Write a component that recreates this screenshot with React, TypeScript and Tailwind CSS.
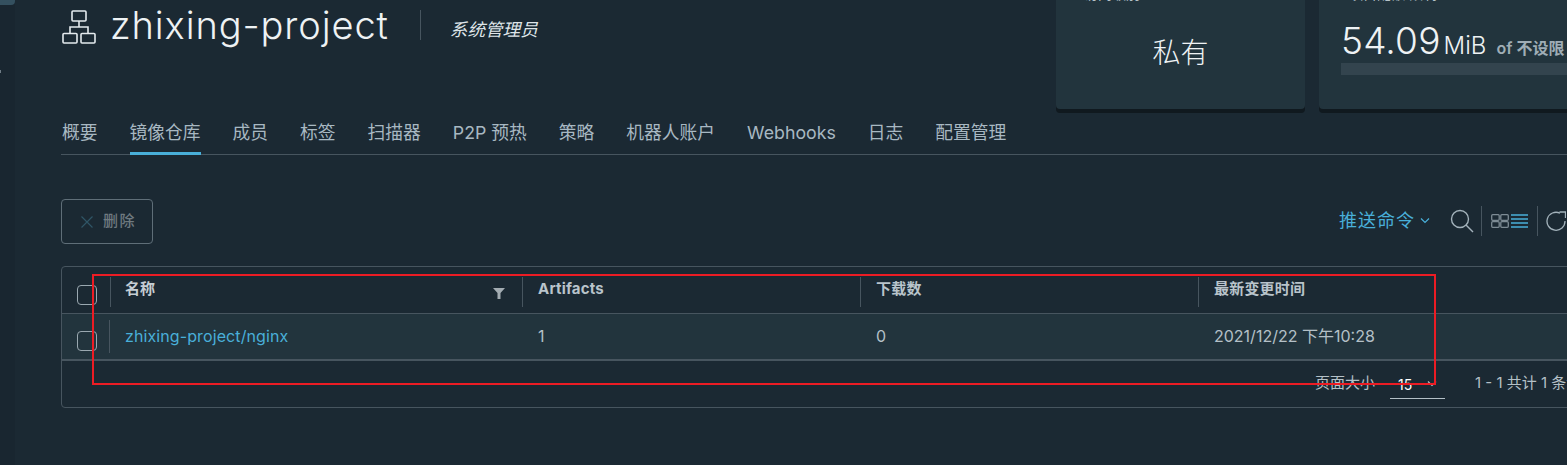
import React from 'react';

const cjk = 'font-["Inter","Noto_Sans_CJK_SC",sans-serif]';

const tabs = ['概要', '镜像仓库', '成员', '标签', '扫描器', 'P2P 预热', '策略', '机器人账户', 'Webhooks', '日志', '配置管理'];

const Checkbox = () => (
  <span className="block h-[20px] w-[20px] rounded-[4px] border border-[#9aa8b0]" />
);

const ProjectIcon = () => (
  <svg className="mt-[4px] ml-[1px]" width="34" height="34" viewBox="0 0 34 34" fill="none" stroke="#e4eaee" strokeWidth="1.6">
    <rect x="10" y="1" width="14" height="10" rx="1" />
    <rect x="1" y="23.5" width="14" height="9.5" rx="1" />
    <rect x="19" y="23.5" width="14" height="9.5" rx="1" />
    <path d="M17 11v6M8 23.5V17h18v6.5" />
  </svg>
);

const App = () => {
  return (
    <div className={`flex h-[465px] w-[1567px] overflow-hidden bg-[#1b2933] ${cjk}`}>
      <div className="w-[15px] shrink-0 bg-[#192630]">
        <div className="h-[5px] rounded-br-[4px] bg-[#34505f]" />
        <div className="mt-[65px] h-[3px] w-[1px] bg-[#6f7c85]" />
      </div>

      <div className="flex min-w-0 flex-1 flex-col pl-[46px]">
        {/* Header */}
        <div className="flex h-[113px] shrink-0 items-start">
          <div className="flex items-center pt-[5px]">
            <ProjectIcon />
            <h1 className="ml-[14px] text-[38px] leading-[40px] font-light tracking-[0.9px] text-[#eef2f4]">zhixing-project</h1>
            <span className="ml-[31px] h-[30px] w-px bg-[#47555f]" />
            <span className="mt-[10px] ml-[29px] text-[17.6px] text-[#dfe5e9] italic">系统管理员</span>
          </div>
          <div className="ml-auto flex -mr-[300px] gap-[14px]">
            <div className="-mt-[40px] flex h-[149px] w-[249px] flex-col rounded-[4px] bg-[#22343d] shadow-[0_4px_0_#10191f]">
              <div className="h-[40px] pt-[24px] pl-[28px] text-[14px] leading-[20px] text-[#b6c2c9]">访问级别</div>
              <div className="pt-[33px] text-center text-[28px] leading-[40px] font-light text-[#eef2f4]">私有</div>
            </div>
            <div className="-mt-[40px] h-[149px] w-[548px] rounded-[4px] bg-[#22343d] px-[22px] shadow-[0_4px_0_#10191f]">
              <div className="h-[40px] pt-[24px] pl-[8px] text-[14px] leading-[20px] text-[#b6c2c9]">项目配额 限制</div>
              <div className="flex h-[63px] items-baseline pt-[21px] whitespace-nowrap">
                <span className="text-[37px] leading-[40px] font-light tracking-[0.2px] text-[#eef2f4]">54.09</span>
                <span className="ml-[3px] text-[24px] leading-[40px] font-light text-[#eef2f4]">MiB</span>
                <span className="ml-[10px] text-[16px] font-semibold text-[#9fadb6]">of 不设限</span>
              </div>
              <div className="h-[12px] bg-[#33444e]" />
            </div>
          </div>
        </div>

        {/* Tabs */}
        <div className="flex h-[42px] shrink-0 gap-[32px] border-b border-[#47555f] pt-[7px] pl-[1px] text-[17.75px] text-[#a8b8c2]">
          {tabs.map((tab) => (
            <div
              key={tab}
              className={`h-[35px] leading-[26px] whitespace-nowrap ${tab === '镜像仓库' ? 'border-b-[3px] border-[#49afd9]' : ''}`}
            >
              {tab}
            </div>
          ))}
        </div>

        {/* Toolbar */}
        <div className="mt-[44px] flex h-[45px] shrink-0 items-center">
          <button className="flex h-[45px] w-[92px] items-center rounded-[4px] border border-[#5f6e78] pl-[18px] text-[15px] font-medium tracking-[1.5px] text-[#6f7a80]">
            <svg width="14" height="14" viewBox="0 0 14 14" stroke="#2f5566" strokeWidth="1.2" fill="none">
              <path d="M1.5 1.5l11 11M12.5 1.5l-11 11" />
            </svg>
            <span className="ml-[9px]">删除</span>
          </button>
          <div className="ml-auto -mt-[2px] flex w-[228px] shrink-0 items-center overflow-hidden">
            <span className="text-[18px] tracking-[1px] whitespace-nowrap text-[#49afd9]">推送命令</span>
            <svg className="ml-[5px] shrink-0" width="10" height="8" viewBox="0 0 10 8" fill="none" stroke="#49afd9" strokeWidth="1.2">
              <path d="M1 1.5l4 4 4-4" />
            </svg>
            <svg className="ml-[20px] shrink-0" width="24" height="24" viewBox="0 0 24 24" fill="none" stroke="#a3b2bb" strokeWidth="1.4">
              <circle cx="10" cy="10" r="8.5" />
              <path d="M16 16l7 7" />
            </svg>
            <span className="ml-[7px] h-[30px] w-px shrink-0 bg-[#47555f]" />
            <svg className="ml-[9px] shrink-0" width="18" height="14" viewBox="0 0 18 14" fill="none" stroke="#7d8b94" strokeWidth="1.3">
              <rect x="0.7" y="0.7" width="7.5" height="5.6" rx="1" />
              <rect x="9.8" y="0.7" width="7.5" height="5.6" rx="1" />
              <rect x="0.7" y="7.7" width="7.5" height="5.6" rx="1" />
              <rect x="9.8" y="7.7" width="7.5" height="5.6" rx="1" />
            </svg>
            <svg className="ml-[2px] shrink-0" width="17" height="14" viewBox="0 0 17 14" stroke="#49afd9" strokeWidth="1.3">
              <path d="M0 1h17M0 5h17M0 9h17M0 13h17" />
            </svg>
            <span className="ml-[9px] h-[30px] w-px shrink-0 bg-[#47555f]" />
            <svg className="ml-[8px] shrink-0" width="20" height="20" viewBox="0 0 20 20" fill="none" stroke="#a3b2bb" strokeWidth="1.3">
              <path d="M14 2.2A9 9 0 1 0 19 10" />
              <path d="M13.5 1h6v6" />
            </svg>
          </div>
        </div>

        {/* Table */}
        <div className="mt-[22px] mr-[-10px] rounded-[4px] border border-[#47555f] text-[#b4c0c7]">
          <div className="flex h-[47px] border-b border-[#47555f]">
            <div className="flex w-[48px] shrink-0 items-end pb-[8px] pl-[15px]">
              <Checkbox />
            </div>
            <div className="flex w-[412px] shrink-0 pt-[10px]">
              <span className="h-[30px] w-px bg-[#47555f]" />
              <span className="ml-[14px] text-[15px] leading-[24px] font-bold text-[#c5ced4]">名称</span>
              <svg className="mt-[11px] mr-[17px] ml-auto" width="12" height="11" viewBox="0 0 12 11" fill="#a3acb2">
                <path d="M0 0h12L7.5 5v6h-3V5z" />
              </svg>
            </div>
            {[['Artifacts', 338], ['下载数', 338], ['最新变更时间', 340]].map(([label, width]) => (
              <div key={label} className="flex shrink-0 pt-[10px]" style={{ width: Number(width) }}>
                <span className="h-[30px] w-px bg-[#47555f]" />
                <span className="ml-[15px] text-[15px] leading-[24px] font-bold tracking-[0.2px] text-[#b9c4cb]">{label}</span>
              </div>
            ))}
          </div>
          <div className="flex h-[47px] border-b-2 border-[#47555f] bg-[#22343d] text-[16px]">
            <div className="flex w-[47px] shrink-0 items-end pb-[8px] pl-[15px]">
              <Checkbox />
            </div>
            <div className="flex w-[413px] shrink-0 items-center">
              <span className="h-[33px] w-px bg-[#47555f]" />
              <span className="ml-[15px] pb-[2px] tracking-[0.1px] text-[#49afd9]">zhixing-project/nginx</span>
            </div>
            <div className="flex w-[338px] shrink-0 items-center pb-[2px] pl-[16px]">1</div>
            <div className="flex w-[338px] shrink-0 items-center pb-[2px] pl-[16px]">0</div>
            <div className="flex w-[340px] shrink-0 items-center pb-[2px] pl-[16px]">2021/12/22 下午10:28</div>
          </div>
          <div className="flex h-[46px] items-start text-[15px] whitespace-nowrap">
            <span className="ml-[1253px] shrink-0 pt-[12px] leading-[20px]">页面大小</span>
            <div className="ml-[15px] flex h-[38px] w-[55px] shrink-0 items-center border-b border-[#b4c0c7] pt-[9px] pl-[8px] text-[14px] text-white">
              15
              <svg className="ml-[15px]" width="10" height="8" viewBox="0 0 10 8" fill="none" stroke="#b4c0c7" strokeWidth="1.2">
                <path d="M1 1.5l4 4 4-4" />
              </svg>
            </div>
            <span className="ml-[30px] shrink-0 pt-[12px] leading-[20px]">1 - 1 共计 1 条记录</span>
          </div>
        </div>
      </div>

      {/* Red annotation box from the screenshot */}
      <div className="pointer-events-none absolute top-[274px] left-[92px] h-[111px] w-[1344px] border-2 border-[#ed1c24]" />
    </div>
  );
};

export default App;
